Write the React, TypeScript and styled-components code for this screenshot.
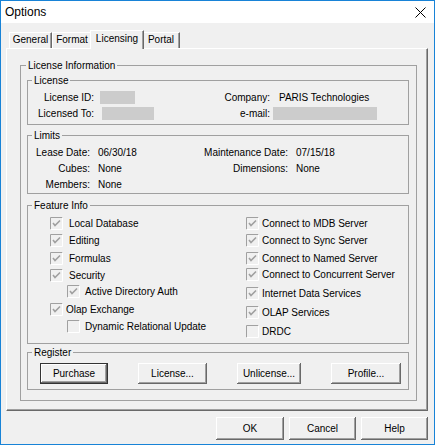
import React from "react";
import styled, { createGlobalStyle } from "styled-components";

const GlobalStyle = createGlobalStyle`
  html, body {
    margin: 0;
    padding: 0;
    background: #fff;
  }
  body {
    font-family: "Liberation Sans", Arial, sans-serif;
    font-size: 10px;
    color: #000;
  }
`;

const Window = styled.div`
  box-sizing: border-box;
  width: 435px;
  height: 445px;
  border: 1px solid #1883d7;
  background: #f0f0f0;
  display: flex;
  flex-direction: column;
`;

const TitleBar = styled.div`
  height: 22px;
  flex: none;
  background: #fff;
  display: flex;
  align-items: center;
  justify-content: space-between;
  padding: 0 8px 0 4px;
  font-size: 12px;
`;

const Body = styled.div`
  padding: 7px 6px 0 5px;
`;

const Tabs = styled.div`
  display: flex;
  align-items: flex-end;
  height: 18px;
  padding-left: 3px;
`;

const Tab = styled.div<{ $active?: boolean; $w: number }>`
  box-sizing: border-box;
  position: relative;
  z-index: ${(p) => (p.$active ? 2 : 1)};
  width: ${(p) => p.$w}px;
  height: ${(p) => (p.$active ? 19 : 16)}px;
  margin: 0 ${(p) => (p.$active ? -2 : 0)}px ${(p) => (p.$active ? -1 : 0)}px;
  background: #f0f0f0;
  border-top: 1px solid #fff;
  border-left: 1px solid #fff;
  border-right: 1px solid #696969;
  box-shadow: inset -1px 0 #a0a0a0;
  line-height: ${(p) => (p.$active ? 16 : 14)}px;
  text-align: center;
  white-space: nowrap;
`;

const Panel = styled.div`
  box-sizing: border-box;
  height: 363px;
  border-top: 1px solid #fff;
  border-left: 1px solid #fff;
  border-right: 1px solid #696969;
  border-bottom: 1px solid #696969;
  box-shadow: inset -1px -1px #a0a0a0;
  padding: 10px 10px 0 13px;
`;

const Group = styled.fieldset<{ $mt?: number }>`
  margin: ${(p) => p.$mt ?? 0}px 0 0;
  padding: 0;
  min-width: 0;
  border: 1px solid #a0a0a0;
`;

const Legend = styled.legend<{ $ml: number }>`
  margin-left: ${(p) => p.$ml}px;
  padding: 0 2px;
  line-height: 13px;
`;

const GroupBody = styled.div<{ $pad: string }>`
  padding: ${(p) => p.$pad};
`;

const Fields = styled.div<{ $cols: string; $gap: number }>`
  display: grid;
  grid-template-columns: ${(p) => p.$cols};
  column-gap: ${(p) => p.$gap}px;
  grid-auto-rows: 16px;
  align-items: center;
`;

const Label = styled.span`
  justify-self: end;
  white-space: nowrap;
`;

const Value = styled.span<{ $dx?: number }>`
  margin-left: ${(p) => p.$dx ?? 0}px;
  white-space: nowrap;
`;

const Redacted = styled.span<{ $w: number; $dx?: number }>`
  display: block;
  width: ${(p) => p.$w}px;
  height: 13px;
  margin-left: ${(p) => p.$dx ?? 0}px;
  background: #cccccc;
`;

const Features = styled.div`
  display: grid;
  grid-template-columns: 196px 1fr;
  padding: 5px 0 5px 22px;
`;

const FeatureColumn = styled.div`
  display: flex;
  flex-direction: column;
`;

const Feature = styled.div<{ $mt: number; $indent: number }>`
  display: flex;
  align-items: center;
  height: 13px;
  margin-top: ${(p) => p.$mt}px;
  margin-left: ${(p) => p.$indent}px;
  white-space: nowrap;
`;

const FeatureLabel = styled.span<{ $gap: number }>`
  margin-left: ${(p) => p.$gap}px;
`;

const ButtonRow = styled.div<{ $pad: string }>`
  display: flex;
  justify-content: space-between;
  padding: ${(p) => p.$pad};
`;

const Footer = styled.div`
  display: flex;
  justify-content: flex-end;
  gap: 5px;
  margin-top: 6px;
`;

const Button = styled.button<{ $w: number; $h: number; $default?: boolean }>`
  box-sizing: border-box;
  width: ${(p) => p.$w}px;
  height: ${(p) => p.$h}px;
  padding: 0;
  background: #f0f0f0;
  border: ${(p) => (p.$default ? "1px solid #333" : "none")};
  box-shadow: inset -1px -1px #696969, inset 1px 1px #fff,
    inset -2px -2px #a0a0a0, inset 2px 2px #f0f0f0;
  font-family: "Liberation Sans", Arial, sans-serif;
  font-size: 10px;
  color: #000;
`;

const CheckBox = ({ checked }: { checked: boolean }) => (
  <svg width="13" height="13" viewBox="0 0 13 13">
    <rect x="0" y="0" width="13" height="13" fill="#f0f0f0" />
    <path d="M0.5 12.5V0.5H12.5" stroke="#a0a0a0" fill="none" />
    <path d="M0.5 12.5H12.5V0.5" stroke="#fff" fill="none" />
    {checked && (
      <path d="M3 6l2 2.5L10 3.5" stroke="#a0a0a0" strokeWidth="1.6" fill="none" />
    )}
  </svg>
);

const CloseIcon = () => (
  <svg width="11" height="11" viewBox="0 0 11 11">
    <path d="M0.5 0.5l10 10M10.5 0.5l-10 10" stroke="#000" strokeWidth="1" />
  </svg>
);

type Item = { label: string; y: number; indent?: number; gap?: number; checked?: boolean };

const leftFeatures: Item[] = [
  { label: "Local Database", y: 224 },
  { label: "Editing", y: 241 },
  { label: "Formulas", y: 259 },
  { label: "Security", y: 276 },
  { label: "Active Directory Auth", y: 292, indent: 17, gap: 5 },
  { label: "Olap Exchange", y: 310, gap: 3 },
  { label: "Dynamic Relational Update", y: 327, indent: 17, gap: 5, checked: false },
];

const rightFeatures: Item[] = [
  { label: "Connect to MDB Server", y: 224 },
  { label: "Connect to Sync Server", y: 241 },
  { label: "Connect to Named Server", y: 259 },
  { label: "Connect to Concurrent Server", y: 275 },
  { label: "Internet Data Services", y: 294 },
  { label: "OLAP Services", y: 313 },
  { label: "DRDC", y: 332, checked: false },
];

const renderColumn = (items: Item[], gap: number) => (
  <FeatureColumn>
    {items.map((item, i) => (
      <Feature
        key={item.label}
        $mt={i === 0 ? 0 : item.y - items[i - 1].y - 13}
        $indent={item.indent ?? 0}
      >
        <CheckBox checked={item.checked !== false} />
        <FeatureLabel $gap={item.gap ?? gap}>{item.label}</FeatureLabel>
      </Feature>
    ))}
  </FeatureColumn>
);

export default function App() {
  return (
    <>
      <GlobalStyle />
      <Window>
        <TitleBar>
          <span>Options</span>
          <CloseIcon />
        </TitleBar>
        <Body>
          <Tabs>
            <Tab $w={43}>General</Tab>
            <Tab $w={40}>Format</Tab>
            <Tab $w={54} $active>
              Licensing
            </Tab>
            <Tab $w={38}>Portal</Tab>
          </Tabs>
          <Panel>
            <Group>
              <Legend $ml={5}>License Information</Legend>
              <GroupBody $pad="2px 7px 10px 6px">
                <Group>
                  <Legend $ml={4}>License</Legend>
                  <GroupBody $pad="2px 0 3px">
                    <Fields $cols="66px 70px 94px 1fr" $gap={6}>
                      <Label>License ID:</Label>
                      <Redacted $w={35} />
                      <Label>Company:</Label>
                      <Value $dx={3}>PARIS Technologies</Value>
                      <Label>Licensed To:</Label>
                      <Redacted $w={52} $dx={2} />
                      <Label>e-mail:</Label>
                      <Redacted $w={104} $dx={-3} />
                    </Fields>
                  </GroupBody>
                </Group>
                <Group $mt={4}>
                  <Legend $ml={4}>Limits</Legend>
                  <GroupBody $pad="2px 0 1px">
                    <Fields $cols="62px 100px 82px 1fr" $gap={8}>
                      <Label>Lease Date:</Label>
                      <Value>06/30/18</Value>
                      <Label>Maintenance Date:</Label>
                      <Value>07/15/18</Value>
                      <Label>Cubes:</Label>
                      <Value>None</Value>
                      <Label>Dimensions:</Label>
                      <Value>None</Value>
                      <Label>Members:</Label>
                      <Value>None</Value>
                    </Fields>
                  </GroupBody>
                </Group>
                <Group $mt={5}>
                  <Legend $ml={4}>Feature Info</Legend>
                  <Features>
                    {renderColumn(leftFeatures, 6)}
                    {renderColumn(rightFeatures, 3)}
                  </Features>
                </Group>
                <Group $mt={2}>
                  <Legend $ml={4}>Register</Legend>
                  <ButtonRow $pad="4px 7px 5px 12px">
                    <Button $w={68} $h={21} $default>
                      Purchase
                    </Button>
                    <Button $w={69} $h={21}>License...</Button>
                    <Button $w={64} $h={21}>Unlicense...</Button>
                    <Button $w={70} $h={21}>Profile...</Button>
                  </ButtonRow>
                </Group>
              </GroupBody>
            </Group>
          </Panel>
          <Footer>
            <Button $w={68} $h={23}>OK</Button>
            <Button $w={67} $h={23}>Cancel</Button>
            <Button $w={67} $h={23}>Help</Button>
          </Footer>
        </Body>
      </Window>
    </>
  );
}
